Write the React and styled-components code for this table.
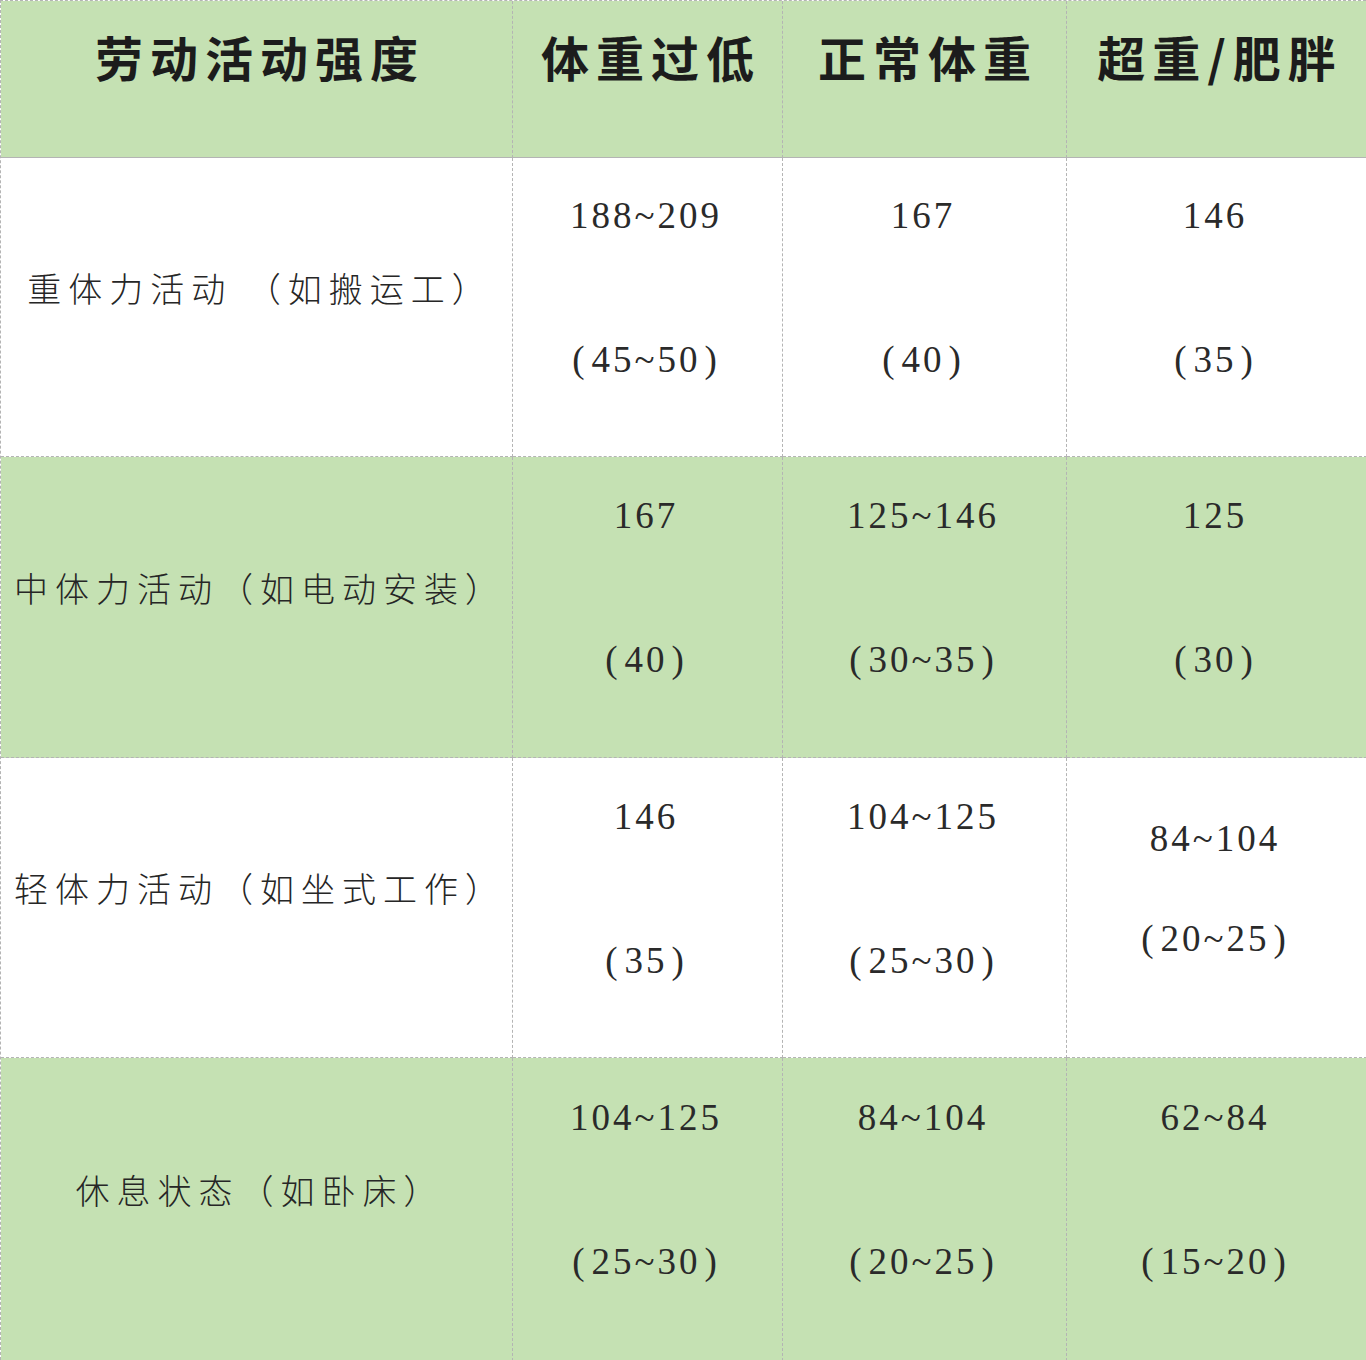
import React from 'react';
import styled, { createGlobalStyle } from 'styled-components';

const GlobalStyle = createGlobalStyle`
  html, body {
    margin: 0;
    padding: 0;
    background: #ffffff;
  }
`;

const GREEN = '#c5e1b3';
const LINE = '#b4b4b4';

const Table = styled.div`
  display: grid;
  grid-template-columns: 512px 270px 284px 300px;
  grid-template-rows: 157px 299px 301px 300px 303px;
  width: 1366px;
  height: 1360px;
  box-sizing: border-box;
  border-left: 1px dashed ${LINE};
  border-top: 1px dashed ${LINE};
`;

const Cell = styled.div`
  display: flex;
  flex-direction: column;
  align-items: center;
  justify-content: center;
  box-sizing: border-box;
  background: ${(p) => (p.$green ? GREEN : '#ffffff')};
  border-right: 1px dashed ${LINE};
  border-bottom: 1px ${(p) => (p.$solid ? 'solid' : 'dashed')} ${LINE};
  padding-bottom: ${(p) => (p.$solid ? 44 : 38)}px;
`;

const HeaderText = styled.div`
  font-family: "Noto Sans CJK SC", sans-serif;
  font-weight: 700;
  font-size: 48px;
  letter-spacing: 7px;
  margin-right: -7px;
  color: #1c1c1c;
  line-height: 1.2;
`;

const LabelText = styled.div`
  font-family: "Noto Sans CJK SC", sans-serif;
  font-weight: 300;
  font-size: 34px;
  letter-spacing: 7px;
  margin-right: -7px;
  color: #262626;
  line-height: 1.2;
  white-space: nowrap;
`;

const Values = styled.div`
  display: flex;
  flex-direction: column;
  align-items: center;
  gap: ${(p) => p.$gap}px;
  margin-right: 6px;
`;

const Num = styled.div`
  font-family: "Liberation Serif", "Noto Sans CJK SC", serif;
  font-size: 37px;
  letter-spacing: 3px;
  margin-right: -3px;
  color: #2a2a2a;
  line-height: 44px;
  white-space: nowrap;
`;

const Paren = styled.span`
  margin-left: ${(p) => (p.$close ? 4 : 0)}px;
  margin-right: ${(p) => (p.$close ? 0 : 4)}px;
`;

const headers = ['劳动活动强度', '体重过低', '正常体重', '超重/肥胖'];

const rows = [
  {
    label: '重体力活动 （如搬运工）',
    green: false,
    values: [['188~209', '45~50'], ['167', '40'], ['146', '35']],
  },
  {
    label: '中体力活动（如电动安装）',
    green: true,
    values: [['167', '40'], ['125~146', '30~35'], ['125', '30']],
  },
  {
    label: '轻体力活动（如坐式工作）',
    green: false,
    values: [['146', '35'], ['104~125', '25~30'], ['84~104', '20~25', true]],
  },
  {
    label: '休息状态（如卧床）',
    green: true,
    values: [['104~125', '25~30'], ['84~104', '20~25'], ['62~84', '15~20']],
  },
];

export default function App() {
  return (
    <>
      <GlobalStyle />
      <Table>
        {headers.map((h) => (
          <Cell key={h} $green $solid>
            <HeaderText>{h}</HeaderText>
          </Cell>
        ))}
        {rows.map((row) => (
          <React.Fragment key={row.label}>
            <Cell $green={row.green}>
              <LabelText>{row.label}</LabelText>
            </Cell>
            {row.values.map(([kcal, range, compact], i) => (
              <Cell key={i} $green={row.green}>
                <Values $gap={compact ? 56 : 100}>
                  <Num>{kcal}</Num>
                  <Num>
                    <Paren>(</Paren>
                    {range}
                    <Paren $close>)</Paren>
                  </Num>
                </Values>
              </Cell>
            ))}
          </React.Fragment>
        ))}
      </Table>
    </>
  );
}
